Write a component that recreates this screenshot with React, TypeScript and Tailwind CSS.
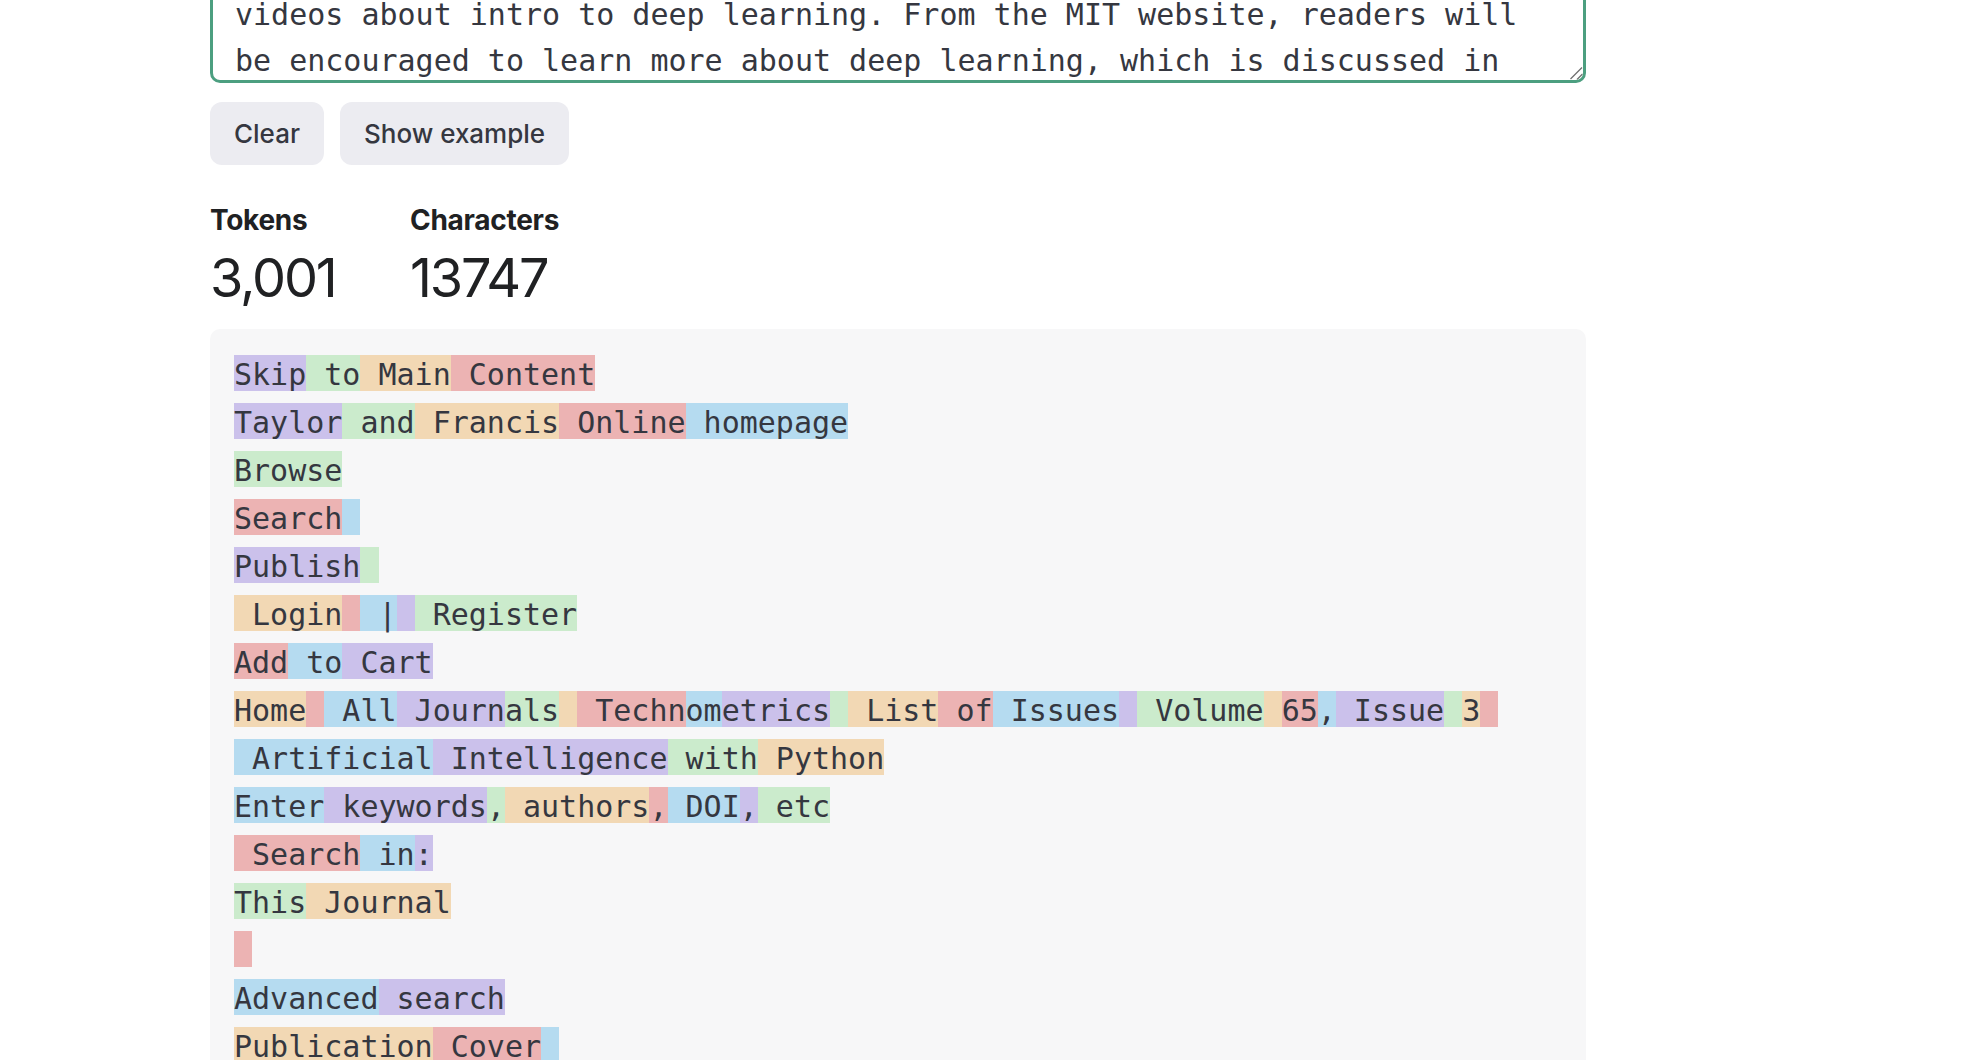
import React from "react";

type Tone = "P" | "G" | "O" | "R" | "B";

const toneBg: Record<Tone, string> = {
  P: "bg-[#cbc1eb]",
  G: "bg-[#cbebcc]",
  O: "bg-[#f2d8b4]",
  R: "bg-[#ecb3b3]",
  B: "bg-[#b5dbf0]",
};

// visible token rows, one array per rendered line
const LINES: [string, Tone][][] = [
  [["Skip", "P"], [" to", "G"], [" Main", "O"], [" Content", "R"]],
  [["Taylor", "P"], [" and", "G"], [" Francis", "O"], [" Online", "R"], [" homepage", "B"]],
  [["Browse", "G"]],
  [["Search", "R"], [" ", "B"]],
  [["Publish", "P"], [" ", "G"]],
  [[" Login", "O"], [" ", "R"], [" |", "B"], [" ", "P"], [" Register", "G"]],
  [["Add", "R"], [" to", "B"], [" Cart", "P"]],
  [
    ["Home", "O"], [" ", "R"], [" All", "B"], [" Journ", "P"], ["als", "G"], [" ", "O"],
    [" Techn", "R"], ["om", "B"], ["etrics", "P"], [" ", "G"], [" List", "O"], [" of", "R"],
    [" Issues", "B"], [" ", "P"], [" Volume", "G"], [" ", "O"], ["65", "R"], [",", "B"],
    [" Issue", "P"], [" ", "G"], ["3", "O"], [" ", "R"],
  ],
  [[" Artificial", "B"], [" Intelligence", "P"], [" with", "G"], [" Python", "O"]],
  [["Enter", "B"], [" keywords", "P"], [",", "G"], [" authors", "O"], [",", "R"], [" DOI", "B"], [",", "P"], [" etc", "G"]],
  [[" Search", "R"], [" in", "B"], [":", "P"]],
  [["This", "G"], [" Journal", "O"]],
  [[" ", "R"]],
  [["Advanced", "B"], [" search", "P"]],
  [["Publication", "O"], [" Cover", "R"], [" ", "B"]],
  [["Technometrics", "P"], [" Cover", "G"], [" Image", "O"]],
  [["Submit", "R"], [" an", "B"], [" article", "P"]],
  [["Journal", "G"], [" homepage", "O"]],
];

const INPUT_LINES = [
  "introduction to the subject. Readers who want more are pointed to MIT",
  "videos about intro to deep learning. From the MIT website, readers will",
  "be encouraged to learn more about deep learning, which is discussed in",
];

const mono = "font-['DejaVu_Sans_Mono','Liberation_Mono',monospace]";

function TokenLine({ tokens }: { tokens: [string, Tone][] }) {
  return (
    <div className="flex h-12 items-center">
      {tokens.map(([t, tone], i) => (
        <span key={i} className={`block h-9 whitespace-pre leading-[40px] ${toneBg[tone]}`}>
          {t}
        </span>
      ))}
    </div>
  );
}

export default function App() {
  return (
    <div className="min-h-screen overflow-hidden bg-white font-['Inter',sans-serif] text-[#202123]">
      <div className="ml-[210px] w-[1376px]">
        {/* input box, scrolled so only its bottom shows */}
        <div className="relative -mt-[117px] flex h-[200px] flex-col justify-end overflow-hidden rounded-[10px] border-[3px] border-[#4c9f80] pl-[22px]">
          <div className={`-mb-[4px] text-[30px] leading-[46px] text-[#353740] ${mono}`}>
            {INPUT_LINES.map((l) => (
              <div key={l} className="whitespace-pre">{l}</div>
            ))}
          </div>
          <svg className="absolute bottom-0 right-0" width="14" height="14" viewBox="0 0 14 14">
            <path d="M1.5 13 L13 1.5 M8 13.5 L13.5 8" stroke="#707070" strokeWidth="1.3" fill="none" />
          </svg>
        </div>

        <div className="mt-[19px] flex gap-4">
          <button className="flex h-[63px] items-center rounded-[12px] bg-[#ececf1] px-[24px] text-[26px] font-medium text-[#353740]">
            Clear
          </button>
          <button className="flex h-[63px] items-center rounded-[12px] bg-[#ececf1] px-[24px] text-[26px] font-medium text-[#353740]">
            Show example
          </button>
        </div>

        <div className="mt-[37px] flex">
          <div className="w-[200px]">
            <div className="text-[28px] font-bold leading-[36px] tracking-[-0.01em]">Tokens</div>
            <div className="mt-[13px] text-[54px] leading-[54px] tracking-[-0.04em]">3,001</div>
          </div>
          <div className="w-[200px]">
            <div className="text-[28px] font-bold leading-[36px] tracking-[-0.01em]">Characters</div>
            <div className="mt-[13px] text-[54px] leading-[54px] tracking-[-0.04em]">13747</div>
          </div>
        </div>

        <div className={`mt-[24px] rounded-[10px] bg-[#f7f7f8] pb-6 pl-6 pt-5 text-[30px] text-[#353740] ${mono}`}>
          {LINES.map((line, i) => (
            <TokenLine key={i} tokens={line} />
          ))}
        </div>
      </div>
    </div>
  );
}
